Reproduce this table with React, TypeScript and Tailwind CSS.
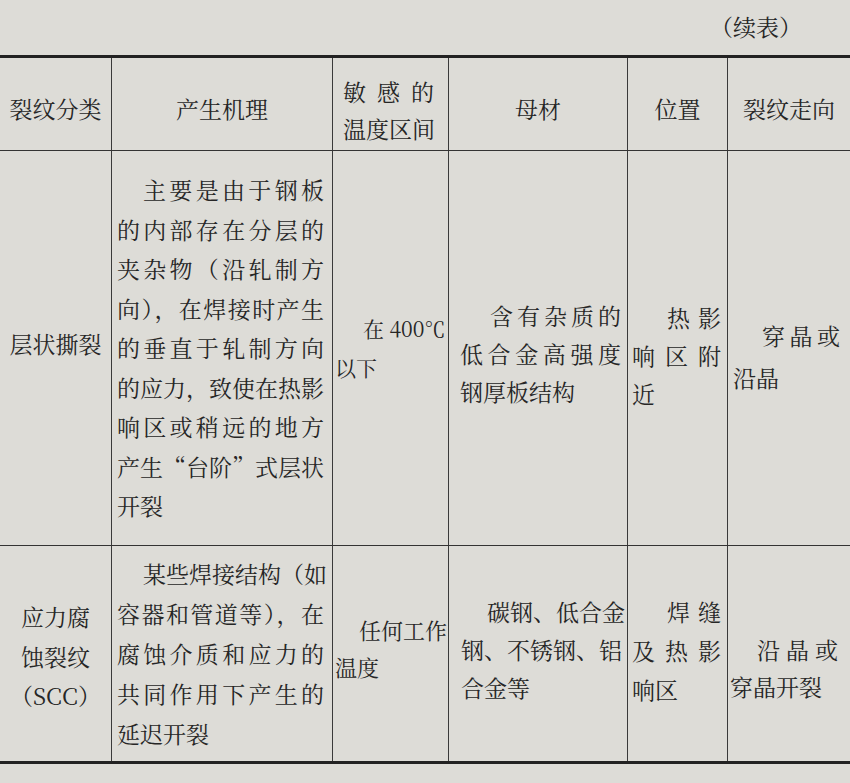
import React from 'react'

type Line = { t: string; indent?: number; j?: boolean }

const font = {
  fontFamily: '"Noto Serif CJK SC", "Noto Sans CJK SC", "Liberation Serif", serif',
}

function Lines({ lines, lh }: { lines: Line[]; lh: string }) {
  return (
    <>
      {lines.map((l, i) => (
        <div
          key={i}
          className={`${lh} whitespace-nowrap ${l.j ? 'text-justify [text-align-last:justify]' : ''}`}
          style={l.indent ? { paddingLeft: l.indent } : undefined}
        >
          {l.t}
        </div>
      ))}
    </>
  )
}

function Cell({
  lines,
  lh = 'leading-[40px]',
  className = '',
  last = false,
}: {
  lines: Line[]
  lh?: string
  className?: string
  last?: boolean
}) {
  return (
    <div
      className={`flex flex-col justify-center ${last ? '' : 'border-r-[1.5px] border-[#3a3a3a]'} ${className}`}
    >
      <Lines lines={lines} lh={lh} />
    </div>
  )
}

const cols = 'grid grid-cols-[112px_221px_116px_179px_100px_122px]'

export default function App() {
  return (
    <div className="w-[850px] h-[783px] bg-[#dddcd7] text-[#262626] overflow-hidden" style={font}>
      <div className="h-[55px] flex items-center justify-end pr-[48px] text-[23px]">（续表）</div>

      <div className="border-t-[3px] border-[#222]">
        {/* header */}
        <div className={`${cols} h-[93px] border-b-[1.5px] border-[#333] text-[23px]`}>
          <Cell lines={[{ t: '裂纹分类' }]} className="items-center pt-[10px]" />
          <Cell lines={[{ t: '产生机理' }]} className="items-center pt-[10px]" />
          <Cell
            lines={[
              { t: '敏感的', j: true },
              { t: '温度区间', j: true },
            ]}
            lh="leading-[37px]"
            className="pl-[10px] pr-[14px] pt-[12px]"
          />
          <Cell lines={[{ t: '母材' }]} className="items-center pt-[10px]" />
          <Cell lines={[{ t: '位置' }]} className="items-center pt-[10px]" />
          <Cell lines={[{ t: '裂纹走向' }]} className="items-center pt-[10px]" last />
        </div>

        {/* 层状撕裂 */}
        <div className={`${cols} h-[395px] border-b-[1.5px] border-[#333] text-[23px]`}>
          <Cell lines={[{ t: '层状撕裂' }]} className="items-center pb-[9px]" />
          <Cell
            lh="leading-[39.5px]"
            className="pl-[5px] pr-[8px]"
            lines={[
              { t: '主要是由于钢板', indent: 26, j: true },
              { t: '的内部存在分层的', j: true },
              { t: '夹杂物（沿轧制方', j: true },
              { t: '向），在焊接时产生', j: true },
              { t: '的垂直于轧制方向', j: true },
              { t: '的应力，致使在热影', j: true },
              { t: '响区或稍远的地方', j: true },
              { t: '产生“台阶”式层状', j: true },
              { t: '开裂' },
            ]}
          />
          <Cell
            lh="leading-[39px]"
            className="pl-[2px] pr-[5px] text-[21px]"
            lines={[
              { t: '在 400℃', indent: 28, j: true },
              { t: '以下' },
            ]}
          />
          <Cell
            lh="leading-[38px]"
            className="pl-[11px] pr-[6px] pt-[12px]"
            lines={[
              { t: '含有杂质的', indent: 30, j: true },
              { t: '低合金高强度', j: true },
              { t: '钢厚板结构' },
            ]}
          />
          <Cell
            lh="leading-[38px]"
            className="pl-[4px] pr-[6px] pt-[16px]"
            lines={[
              { t: '热影', indent: 35, j: true },
              { t: '响区附', j: true },
              { t: '近' },
            ]}
          />
          <Cell
            lh="leading-[42px]"
            className="pl-[5px] pr-[10px] pt-[18px]"
            last
            lines={[
              { t: '穿晶或', indent: 29, j: true },
              { t: '沿晶' },
            ]}
          />
        </div>

        {/* 应力腐蚀裂纹 */}
        <div className={`${cols} h-[218px] border-b-[3px] border-[#222] text-[23px]`}>
          <Cell
            lh="leading-[39.5px]"
            className="items-center pt-[6px]"
            lines={[{ t: '应力腐' }, { t: '蚀裂纹' }, { t: '（SCC）' }]}
          />
          <Cell
            lh="leading-[40px]"
            className="pl-[5px] pr-[8px]"
            lines={[
              { t: '某些焊接结构（如', indent: 26, j: true },
              { t: '容器和管道等），在', j: true },
              { t: '腐蚀介质和应力的', j: true },
              { t: '共同作用下产生的', j: true },
              { t: '延迟开裂' },
            ]}
          />
          <Cell
            lh="leading-[37px]"
            className="pl-[2px] pr-[1px] pb-[11px] text-[22px]"
            lines={[
              { t: '任何工作', indent: 24, j: true },
              { t: '温度' },
            ]}
          />
          <Cell
            lh="leading-[38px]"
            className="pl-[12px] pr-[6px] pb-[8px]"
            lines={[
              { t: '碳钢、低合金', indent: 26, j: true },
              { t: '钢、不锈钢、铝', j: true },
              { t: '合金等' },
            ]}
          />
          <Cell
            lh="leading-[39px]"
            className="pl-[4px] pr-[6px] pb-[6px]"
            lines={[
              { t: '焊缝', indent: 35, j: true },
              { t: '及热影', j: true },
              { t: '响区' },
            ]}
          />
          <Cell
            lh="leading-[37px]"
            className="pl-[2px] pr-[12px] pt-[29px]"
            last
            lines={[
              { t: '沿晶或', indent: 27, j: true },
              { t: '穿晶开裂' },
            ]}
          />
        </div>
      </div>
    </div>
  )
}
